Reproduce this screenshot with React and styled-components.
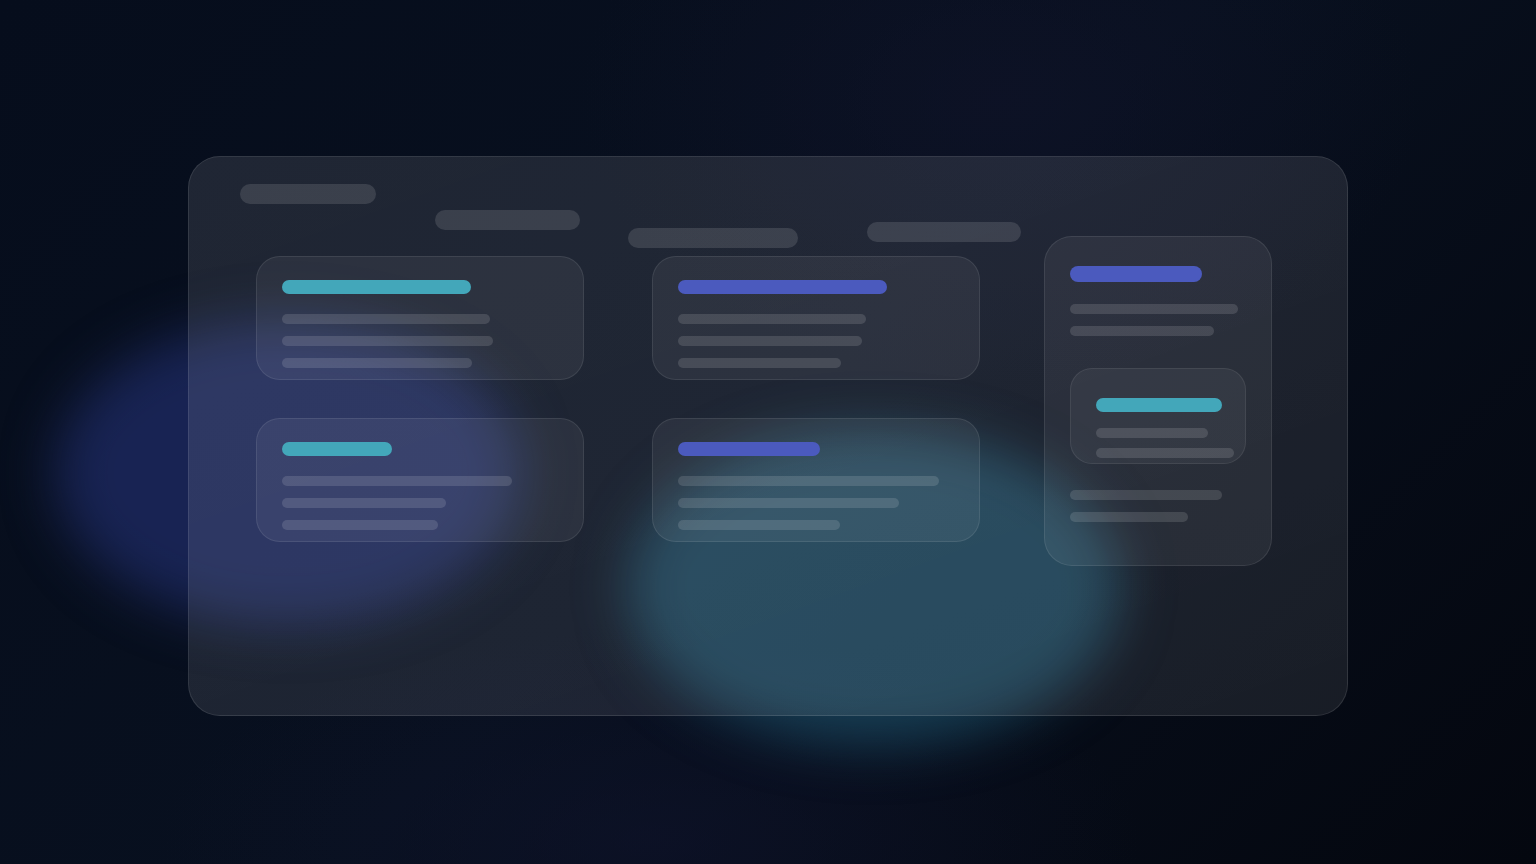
import React from 'react'
import styled, { createGlobalStyle } from 'styled-components'

const GlobalStyle = createGlobalStyle`
  * { box-sizing: border-box; }
  html, body {
    margin: 0;
    padding: 0;
    background: #060c1a;
    font-family: 'Inter', sans-serif;
  }
`;

const pills = [
  { w: 136, ml: 0, mt: 0 },
  { w: 145, ml: 59, mt: 26 },
  { w: 170, ml: 48, mt: 44 },
  { w: 154, ml: 69, mt: 38 },
];

const cards = [
  { tone: 'teal', title: 189, lines: [208, 211, 190] },
  { tone: 'indigo', title: 209, lines: [188, 184, 163] },
  { tone: 'teal', title: 110, lines: [230, 164, 156] },
  { tone: 'indigo', title: 142, lines: [261, 221, 162] },
];

export default function App() {
  return (
    <>
      <GlobalStyle />
      <Page>
        <Blob $x={55} $y={320} $w={465} $h={305} $color="rgba(38, 52, 128, 0.55)" />
        <Blob $x={628} $y={430} $w={492} $h={316} $color="rgba(32, 90, 116, 0.6)" />
        <Panel>
          <Header>
            {pills.map((p, i) => (
              <Pill key={i} $w={p.w} $ml={p.ml} $mt={p.mt} />
            ))}
          </Header>
          <Body>
            <CardGrid>
              {cards.map((c, i) => (
                <Card key={i}>
                  <TitleBar $tone={c.tone} $w={c.title} />
                  <Lines>
                    {c.lines.map((w, j) => <Line key={j} $w={w} />)}
                  </Lines>
                </Card>
              ))}
            </CardGrid>
            <TallCard>
              <TitleBar $tone="indigo" $w={132} $h={16} />
              <Lines $top={22}>
                <Line $w={168} />
                <Line $w={144} />
              </Lines>
              <InnerCard>
                <TitleBar $tone="teal" $w={126} />
                <InnerLines>
                  <Line $w={112} />
                  <Line $w={138} />
                </InnerLines>
              </InnerCard>
              <Lines>
                <Line $w={152} />
                <Line $w={118} />
              </Lines>
            </TallCard>
          </Body>
        </Panel>
      </Page>
    </>
  )
}

const Page = styled.div`
  position: relative;
  width: 100%;
  height: 864px;
  overflow: hidden;
  display: flex;
  align-items: center;
  justify-content: center;
  padding-top: 8px;
  background:
    radial-gradient(ellipse 600px 400px at 1000px 100px, rgba(18, 20, 44, 0.5), transparent 70%),
    radial-gradient(ellipse 700px 300px at 650px 840px, rgba(16, 20, 46, 0.55), transparent 70%),
    linear-gradient(135deg, #060d1c 0%, #08101f 50%, #04070f 100%);
`;

const Blob = styled.div`
  position: absolute;
  left: ${p => p.$x}px;
  top: ${p => p.$y}px;
  width: ${p => p.$w}px;
  height: ${p => p.$h}px;
  border-radius: 50%;
  background: ${p => p.$color};
  filter: blur(26px);
  z-index: 0;
`;

const Panel = styled.div`
  position: relative;
  z-index: 1;
  width: 1160px;
  height: 560px;
  border-radius: 32px;
  border: 1px solid rgba(255, 255, 255, 0.1);
  background: linear-gradient(160deg, rgba(255, 255, 255, 0.1) 0%, rgba(255, 255, 255, 0.095) 50%, rgba(255, 255, 255, 0.08) 100%);
  padding: 27px 51px;
  display: flex;
  flex-direction: column;
`;

const Header = styled.div`
  display: flex;
  align-items: flex-start;
  height: 52px;
`;

const Pill = styled.div`
  width: ${p => p.$w}px;
  height: 20px;
  margin-left: ${p => p.$ml}px;
  margin-top: ${p => p.$mt}px;
  border-radius: 10px;
  background: rgba(255, 255, 255, 0.12);
  flex-shrink: 0;
`;

const Body = styled.div`
  display: flex;
  align-items: flex-start;
  gap: 64px;
  margin-left: 16px;
`;

const CardGrid = styled.div`
  display: grid;
  grid-template-columns: 328px 328px;
  column-gap: 68px;
  row-gap: 38px;
  margin-top: 20px;
`;

const Card = styled.div`
  height: 124px;
  border-radius: 24px;
  border: 1px solid rgba(255, 255, 255, 0.09);
  background: rgba(255, 255, 255, 0.06);
  padding: 23px 25px;
  display: flex;
  flex-direction: column;
`;

const TitleBar = styled.div`
  width: ${p => p.$w}px;
  height: ${p => p.$h || 14}px;
  border-radius: 8px;
  background: ${p => (p.$tone === 'teal' ? '#43a7ba' : '#4b5abe')};
  flex-shrink: 0;
`;

const Lines = styled.div`
  display: flex;
  flex-direction: column;
  gap: 12px;
  margin-top: ${p => p.$top || 20}px;
`;

const Line = styled.div`
  width: ${p => p.$w}px;
  height: 10px;
  border-radius: 5px;
  background: rgba(255, 255, 255, 0.13);
`;

const TallCard = styled.div`
  width: 228px;
  height: 330px;
  border-radius: 28px;
  border: 1px solid rgba(255, 255, 255, 0.09);
  background: rgba(255, 255, 255, 0.06);
  padding: 29px 25px;
  display: flex;
  flex-direction: column;
`;

const InnerCard = styled.div`
  height: 96px;
  margin-top: 32px;
  margin-bottom: 6px;
  border-radius: 22px;
  border: 1px solid rgba(255, 255, 255, 0.08);
  background: rgba(255, 255, 255, 0.05);
  padding: 29px 0 0 25px;
  overflow: hidden;
`;

const InnerLines = styled.div`
  display: flex;
  flex-direction: column;
  gap: 10px;
  margin-top: 16px;
`;
